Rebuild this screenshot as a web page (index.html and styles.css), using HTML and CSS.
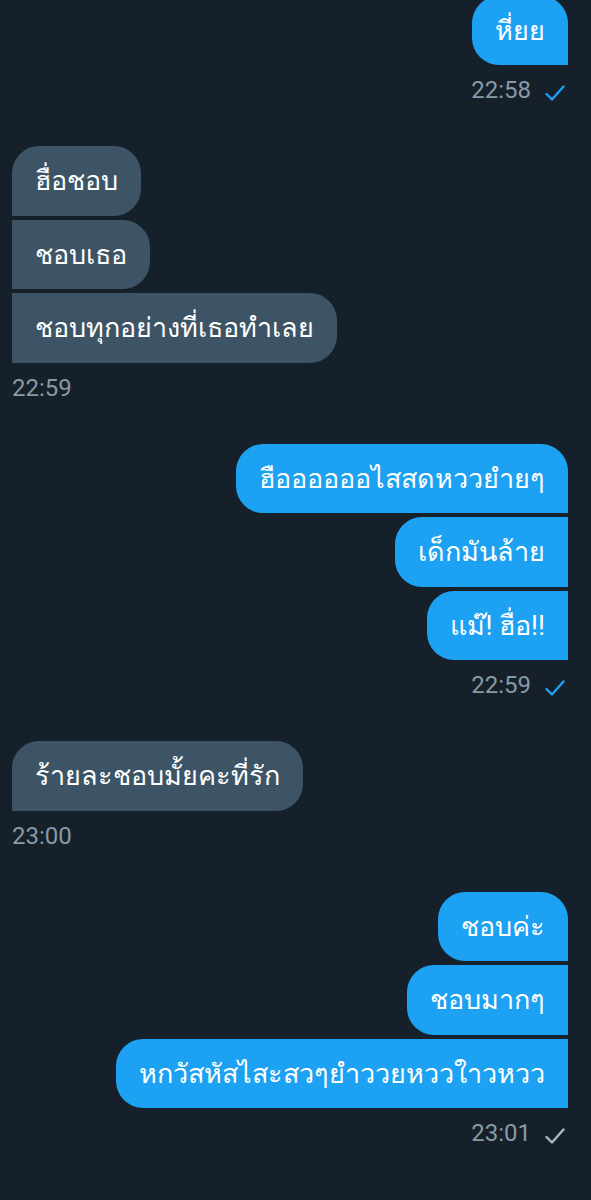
FILE: index.html
```html
<!DOCTYPE html>
<html lang="th">
<head>
    <meta charset="UTF-8">
    <title>ข้อความ</title>
    <link rel="stylesheet" href="styles.css">
</head>
<body>
    <div class="chat">
        <div class="group sent first">
            <div class="bubble">หี่ยย</div>
            <div class="meta">
                <span class="time">22:58</span>
                <svg class="check seen" viewBox="0 0 20 16"><path d="M1.5 9 L7 14.5 L18.5 1.5"/></svg>
            </div>
        </div>

        <div class="group received">
            <div class="bubble">ฮื่อชอบ</div>
            <div class="bubble">ชอบเธอ</div>
            <div class="bubble">ชอบทุกอย่างที่เธอทำเลย</div>
            <div class="meta"><span class="time">22:59</span></div>
        </div>

        <div class="group sent">
            <div class="bubble">ฮืออออออไสสดหววยำยๆ</div>
            <div class="bubble">เด็กมันล้าย</div>
            <div class="bubble">แม๊! ฮื่อ!!</div>
            <div class="meta">
                <span class="time">22:59</span>
                <svg class="check seen" viewBox="0 0 20 16"><path d="M1.5 9 L7 14.5 L18.5 1.5"/></svg>
            </div>
        </div>

        <div class="group received">
            <div class="bubble">ร้ายละชอบมั้ยคะที่รัก</div>
            <div class="meta"><span class="time">23:00</span></div>
        </div>

        <div class="group sent">
            <div class="bubble">ชอบค่ะ</div>
            <div class="bubble">ชอบมากๆ</div>
            <div class="bubble">หกวัสหัสไสะสวๆยำววยหววใาวหวว</div>
            <div class="meta">
                <span class="time">23:01</span>
                <svg class="check" viewBox="0 0 20 16"><path d="M1.5 9 L7 14.5 L18.5 1.5"/></svg>
            </div>
        </div>
    </div>
</body>
</html>
```

FILE: styles.css
```css
* {
    box-sizing: border-box;
    margin: 0;
    padding: 0;
}

body {
    background-color: #15202b;
    font-family: Roboto, "Noto Sans", sans-serif;
    color: #ffffff;
    height: 1200px;
    overflow: hidden;
}

.chat {
    display: flex;
    flex-direction: column;
    gap: 37px;
    padding: 0 23px 0 12px;
    margin-top: -4.5px;
}

.group {
    display: flex;
    flex-direction: column;
    gap: 4px;
}

.group.sent {
    align-items: flex-end;
}

.group.received {
    align-items: flex-start;
}

.bubble {
    height: 69.5px;
    display: flex;
    align-items: center;
    padding: 0 23px;
    font-size: 27px;
    white-space: nowrap;
}

.sent .bubble {
    background-color: #1da1f2;
    border-radius: 27px 0 0 27px;
}

.sent .bubble:first-child {
    border-top-right-radius: 27px;
}

.received .bubble {
    background-color: #3d5466;
    border-radius: 0 27px 27px 0;
}

.received .bubble:first-child {
    border-top-left-radius: 27px;
}

.meta {
    display: flex;
    align-items: center;
    gap: 14px;
    height: 38px;
    margin-top: 2px;
}

.time {
    font-size: 24px;
    color: #8899a6;
}

.check {
    width: 20px;
    height: 16px;
    margin: 5px 3px 0 0;
    fill: none;
    stroke: #aab8c2;
    stroke-width: 2.4;
    stroke-linecap: round;
    stroke-linejoin: round;
}

.check.seen {
    stroke: #1da1f2;
}
```
